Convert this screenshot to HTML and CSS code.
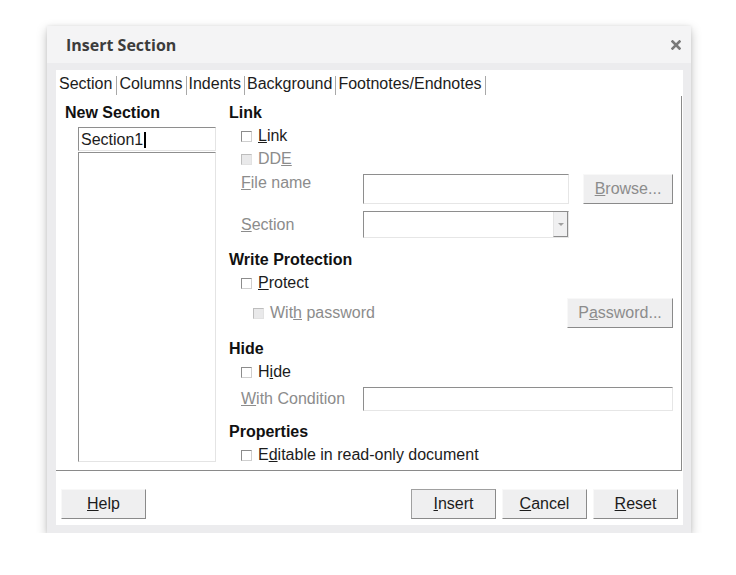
FILE: index.html
```html
<!DOCTYPE html>
<html lang="en">
<head>
    <meta charset="UTF-8">
    <title>Insert Section</title>
    <link rel="stylesheet" href="styles.css">
</head>
<body>
    <div class="dialog">
        <div class="titlebar">
            <span class="title">Insert Section</span>
            <svg class="close" width="10" height="10" viewBox="0 0 10 10">
                <path d="M1.5 1.5 L8.5 8.5 M8.5 1.5 L1.5 8.5" stroke="#7a7a7a" stroke-width="2.6" stroke-linecap="square"/>
            </svg>
        </div>
        <div class="frame">
            <div class="client">
                <div class="tabs">
                    <div class="tab tab-active">Section</div>
                    <div class="tab">Columns</div>
                    <div class="tab">Indents</div>
                    <div class="tab">Background</div>
                    <div class="tab">Footnotes/Endnotes</div>
                </div>
                <div class="page">
                    <div class="left-col">
                        <div class="heading">New Section</div>
                        <div class="name-input">Section1<span class="caret"></span></div>
                        <div class="name-list"></div>
                    </div>
                    <div class="right-col">
                        <div class="heading">Link</div>
                        <div class="check"><span class="box"></span><span><u>L</u>ink</span></div>
                        <div class="check disabled"><span class="box"></span><span>DD<u>E</u></span></div>
                        <div class="field-row row-file">
                            <span class="field-label disabled"><u>F</u>ile name</span>
                            <div class="textbox file-box"></div>
                            <div class="button browse disabled"><span><u>B</u>rowse...</span></div>
                        </div>
                        <div class="field-row row-section">
                            <span class="field-label disabled"><u>S</u>ection</span>
                            <div class="textbox combo"><span class="drop"><span class="arrow"></span></span></div>
                        </div>

                        <div class="heading group">Write Protection</div>
                        <div class="check"><span class="box"></span><span><u>P</u>rotect</span></div>
                        <div class="field-row row-password">
                            <div class="check sub disabled"><span class="box"></span><span>Wit<u>h</u> password</span></div>
                            <div class="button password disabled"><span>P<u>a</u>ssword...</span></div>
                        </div>

                        <div class="heading group group-hide">Hide</div>
                        <div class="check"><span class="box"></span><span>H<u>i</u>de</span></div>
                        <div class="field-row row-condition">
                            <span class="field-label disabled"><u>W</u>ith Condition</span>
                            <div class="textbox condition-box"></div>
                        </div>

                        <div class="heading group group-props">Properties</div>
                        <div class="check"><span class="box"></span><span>E<u>d</u>itable in read-only document</span></div>
                    </div>
                </div>
                <div class="button-bar">
                    <div class="button"><span><u>H</u>elp</span></div>
                    <div class="spacer"></div>
                    <div class="button default"><span><u>I</u>nsert</span></div>
                    <div class="button"><span><u>C</u>ancel</span></div>
                    <div class="button"><span><u>R</u>eset</span></div>
                </div>
            </div>
        </div>
    </div>
</body>
</html>
```
FILE: styles.css
```css
body {
    margin: 0;
    background: #ffffff;
    font-family: 'Liberation Sans', Arial, sans-serif;
    font-size: 16px;
    color: #1c1c1c;
}
.dialog {
    width: 644px;
    margin: 26px 0 0 47px;
    background: #ececee;
    box-shadow: 0 4px 10px rgba(0,0,0,0.25), 0 0 3px rgba(0,0,0,0.08);
}
.titlebar {
    height: 37px;
    padding: 0 10px 0 19px;
    background: #f4f4f5;
    display: flex;
    align-items: center;
    justify-content: space-between;
}
.title {
    font-family: 'Open Sans', 'Noto Sans', sans-serif;
    font-weight: bold;
    font-size: 16px;
    color: #3c3c3c;
}
.frame {
    padding: 7px 8px 8px 9px;
}
.client {
    background: #ffffff;
    height: 455px;
}
.tabs {
    height: 26px;
    box-sizing: border-box;
    padding: 6px 0 0 1px;
    display: flex;
}
.tab {
    height: 19px;
    line-height: 16px;
    padding: 0 3px 0 2px;
    border-right: 1px solid #a8a8a8;
}
.tab-active {
    padding: 0 4px 0 2px;
}
.page {
    width: 626px;
    height: 375px;
    box-sizing: border-box;
    border-right: 1px solid #8a8a8a;
    border-bottom: 1px solid #8a8a8a;
    padding-top: 8px;
    display: flex;
}
.heading {
    font-weight: bold;
    line-height: 18px;
    color: #111;
}
.left-col {
    width: 173px;
}
.left-col .heading {
    padding-left: 9px;
}
.name-input {
    margin: 5px 0 0 22px;
    width: 138px;
    height: 24px;
    box-sizing: border-box;
    border: 1px solid;
    border-color: #8e8e8e #e4e4e4 #e4e4e4 #8e8e8e;
    padding: 1px 0 0 2px;
    line-height: 22px;
    display: flex;
    align-items: center;
}
.caret {
    width: 2px;
    height: 16px;
    background: #000;
    margin-left: 1px;
}
.name-list {
    margin: 1px 0 0 22px;
    width: 138px;
    height: 310px;
    box-sizing: border-box;
    border: 1px solid;
    border-color: #8e8e8e #e4e4e4 #e4e4e4 #8e8e8e;
}
.right-col {
    flex: 1;
    padding-right: 8px;
}
.check {
    display: flex;
    align-items: center;
    line-height: 18px;
    margin: 5px 0 0 12px;
}
.box {
    width: 11px;
    height: 11px;
    box-sizing: border-box;
    border: 1px solid;
    border-color: #8c8c8c #cfcfcf #cfcfcf #8c8c8c;
    background: #fff;
    margin-right: 6px;
}
.disabled {
    color: #8c8c8c;
}
.disabled .box {
    background: #e9e9ea;
    border-color: #bdbdbd #e2e2e2 #e2e2e2 #bdbdbd;
}
.heading.group {
    margin-top: 13px;
}
.heading.group-hide {
    margin-top: 12px;
}
.heading.group-props {
    margin-top: 12px;
}
.field-row {
    display: flex;
    margin-left: 12px;
}
.field-label {
    width: 122px;
    line-height: 18px;
}
.textbox {
    box-sizing: border-box;
    border: 1px solid;
    border-color: #8e8e8e #e6e6e6 #e6e6e6 #8e8e8e;
    background: #fff;
}
.row-file {
    margin-top: 6px;
    align-items: flex-start;
}
.file-box {
    width: 206px;
    height: 30px;
}
.row-section {
    margin-top: 7px;
    align-items: center;
}
.combo {
    width: 206px;
    height: 27px;
    display: flex;
    justify-content: flex-end;
}
.drop {
    width: 15px;
    height: 25px;
    box-sizing: border-box;
    background: #f0f0f1;
    border-left: 1px solid #e4e4e4;
    border-right: 1px solid #8c8c8c;
    border-bottom: 1px solid #8c8c8c;
    display: flex;
    align-items: center;
    justify-content: center;
}
.arrow {
    width: 0;
    height: 0;
    border-left: 3px solid transparent;
    border-right: 3px solid transparent;
    border-top: 3px solid #a0a0a0;
}
.button {
    width: 85px;
    height: 30px;
    box-sizing: border-box;
    background: #efeff0;
    border: 1px solid;
    border-color: #f8f8f8 #8a8a8a #8a8a8a #f8f8f8;
    display: flex;
    align-items: center;
    justify-content: center;
    line-height: 18px;
}
.button.browse {
    width: 90px;
    margin-left: 14px;
}
.row-password {
    margin-top: 6px;
    height: 30px;
    align-items: center;
    justify-content: space-between;
}
.check.sub {
    margin: 0 0 0 12px;
}
.button.password {
    width: 106px;
}
.row-condition {
    margin-top: 6px;
    align-items: center;
}
.condition-box {
    width: 310px;
    height: 24px;
}
.button-bar {
    display: flex;
    padding: 18px 5px 0 5px;
    gap: 6px;
}
.spacer {
    flex: 1;
}
.button.default {
    border-color: #a0a0a0 #8a8a8a #8a8a8a #a0a0a0;
}
```
